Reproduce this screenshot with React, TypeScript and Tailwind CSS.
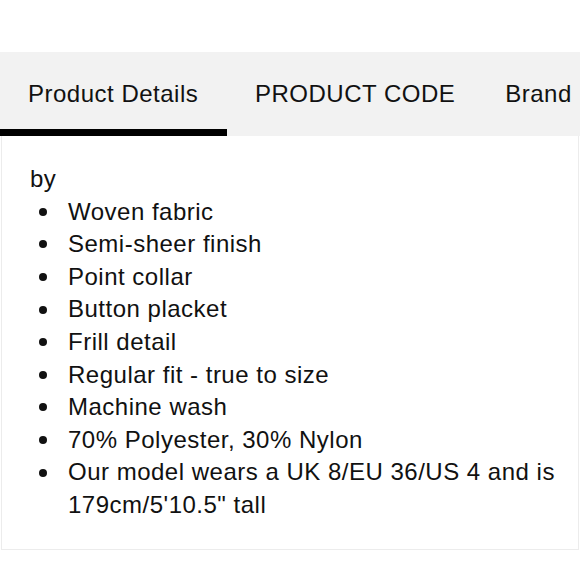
const items = [
  "Woven fabric",
  "Semi-sheer finish",
  "Point collar",
  "Button placket",
  "Frill detail",
  "Regular fit - true to size",
  "Machine wash",
  "70% Polyester, 30% Nylon",
  "Our model wears a UK 8/EU 36/US 4 and is 179cm/5'10.5\" tall",
];

export default function App() {
  return (
    <div className="h-[580px] w-[580px] overflow-hidden bg-white pt-[52px] font-['Liberation_Sans',sans-serif] tracking-[0.5px] text-[#111]">
      {/* tabs */}
      <div className="flex h-[84px] bg-[#f2f2f2] text-[24px] whitespace-nowrap">
        <div className="flex w-[227px] shrink-0 items-center border-b-[7px] border-black pl-[28px] pt-[6px]">
          Product Details
        </div>
        <div className="flex shrink-0 items-center pl-[28px] pt-[6px] pb-[7px]">PRODUCT CODE</div>
        <div className="flex shrink-0 items-center pl-[50px] pt-[6px] pb-[7px]">Brand</div>
      </div>

      {/* panel */}
      <div className="mx-px h-[414px] border-x border-b border-[#ececec] pl-[28px] pr-[16px] pt-[27px] text-[24px] leading-[32.6px]">
        <div>by</div>
        <ul className="list-none">
          {items.map((t) => (
            <li key={t} className="flex">
              <span className="flex h-[32.6px] w-[38px] shrink-0 items-center pl-[9px]">
                <span className="h-[8px] w-[8px] rounded-full bg-[#111]" />
              </span>
              <span>{t}</span>
            </li>
          ))}
        </ul>
      </div>
    </div>
  );
}
